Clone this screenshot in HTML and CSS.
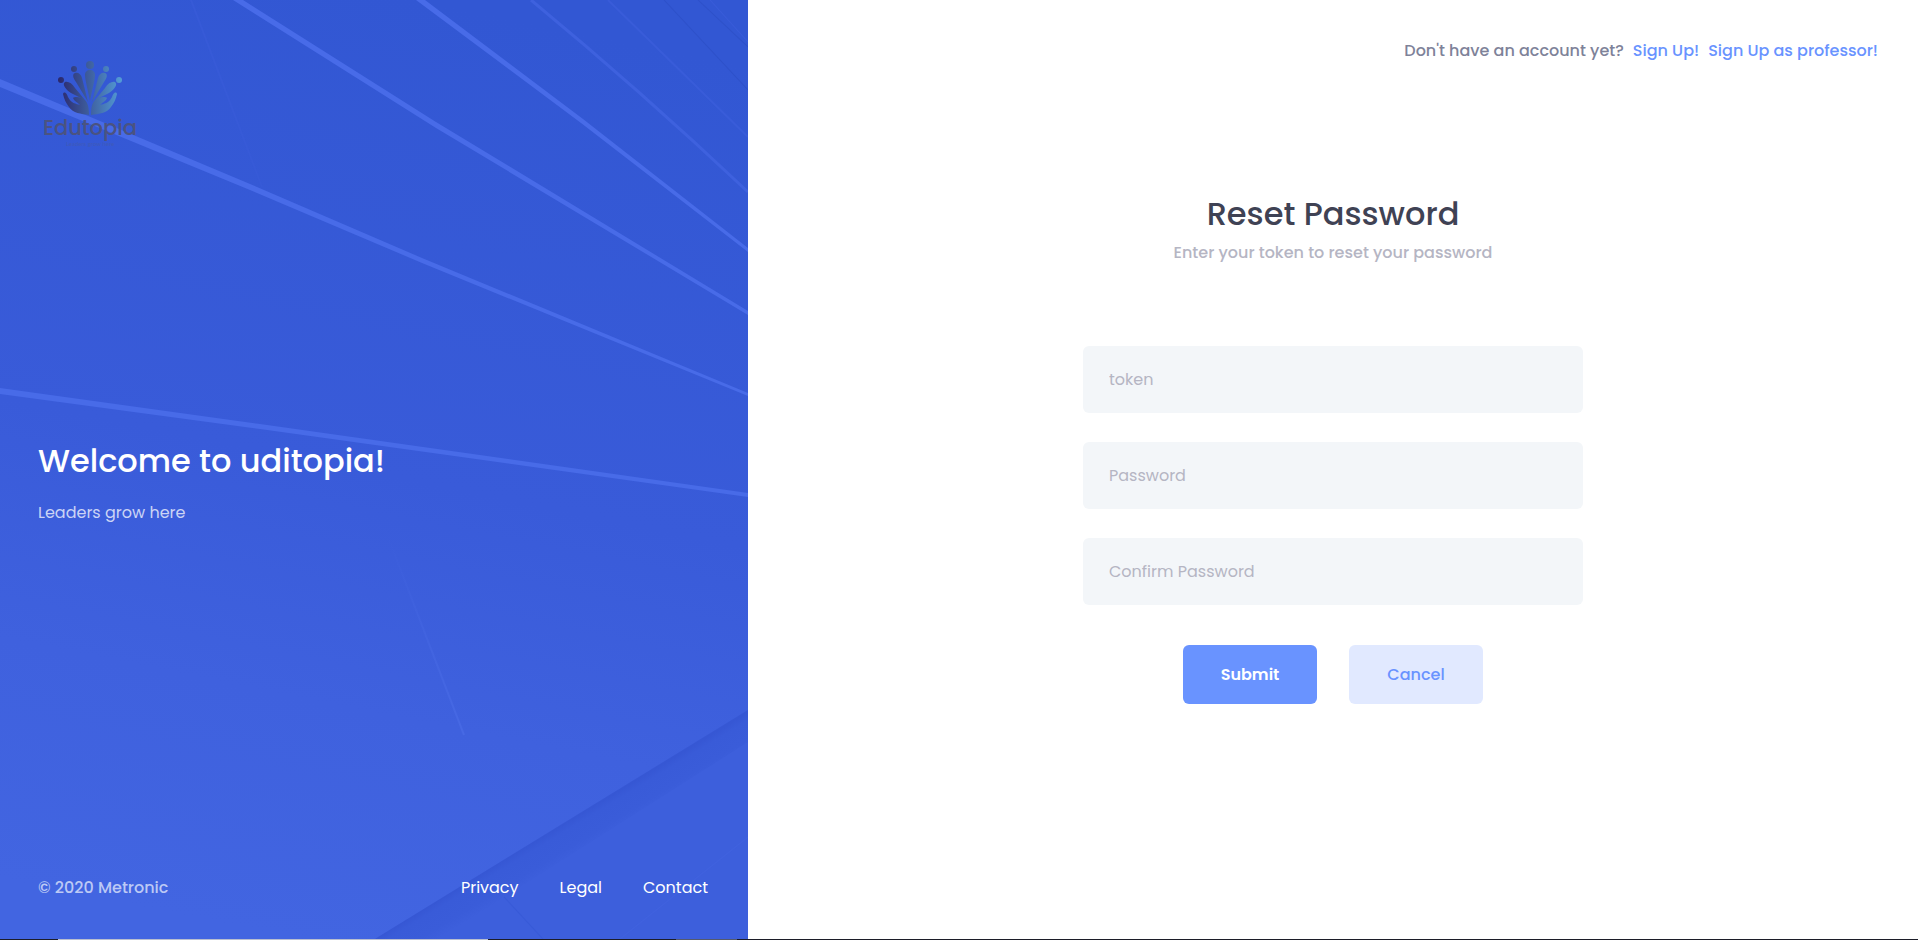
FILE: index.html
```html
<!DOCTYPE html>
<html lang="en">
<head>
<meta charset="utf-8">
<title>Reset Password</title>
<link rel="stylesheet" href="styles.css">
</head>
<body>
<div class="login">
  <aside class="aside">
    <svg class="aside-art" viewBox="0 0 748 939" preserveAspectRatio="none" aria-hidden="true">
      <defs>
        <linearGradient id="sky" x1="0.56" y1="0" x2="0.4" y2="1">
          <stop offset="0" stop-color="#3257d3"/>
          <stop offset="0.5" stop-color="#395bd9"/>
          <stop offset="0.75" stop-color="#3f61de"/>
          <stop offset="1" stop-color="#4265e1"/>
        </linearGradient>
        <linearGradient id="beam" gradientUnits="userSpaceOnUse" x1="375" y1="939" x2="392" y2="967">
          <stop offset="0" stop-color="#3657d4"/>
          <stop offset="0.2" stop-color="#395bd8"/>
          <stop offset="0.7" stop-color="#3a5cd9"/>
          <stop offset="1" stop-color="#3d5fdc"/>
        </linearGradient>
        <linearGradient id="trace" gradientUnits="userSpaceOnUse" x1="388" y1="537" x2="464" y2="735">
          <stop offset="0" stop-color="#4365e1" stop-opacity="0"/>
          <stop offset="1" stop-color="#4769e4"/>
        </linearGradient>
      </defs>
      <rect width="748" height="939" fill="url(#sky)"/>
      <path d="M748 710L375 939H748Z" fill="#3d5fdc"/>
      <path d="M748 710L375 939H439L748 742Z" fill="url(#beam)"/>
      <g fill="none">
        <path d="M531 0Q640 90 748 192" stroke="#3e61de" stroke-width="3"/>
        <path d="M608 0L748 137" stroke="#395cd9" stroke-width="2"/>
        <path d="M664 0L748 90M698 0L748 47" stroke="#2e51c9" stroke-width="1"/>
        <path d="M710 0L748 42" stroke="#395cd9" stroke-width="1"/>
        <path d="M191 0L262 187" stroke="#375ad7" stroke-width="2"/>
        <path d="M388 537L464 735" stroke="url(#trace)" stroke-width="2"/>
        <path d="M504 897L543 939" stroke="#385ad7" stroke-width="1"/>
        <path d="M620 939L748 837" stroke="#4062de" stroke-width="1"/>
      </g>
      <g fill="#486be8">
        <path d="M0 79L257 187L422 258L748 393V396L422 263L257 193L0 87Z"/>
        <path d="M233 0H243L436 122L748 311V315L436 128Z"/>
        <path d="M416 0H425L583 119L748 248V252L581 123Z"/>
        <path d="M0 388L260 424L748 493V497L260 429L0 394Z"/>
      </g>
    </svg>
    <a class="logo" href="#" aria-label="Edutopia">
      <svg class="logo-mark" viewBox="0 0 66 56" aria-hidden="true">
        <defs>
          <linearGradient id="mark" gradientUnits="userSpaceOnUse" x1="0" y1="0" x2="66" y2="0">
            <stop offset="0" stop-color="#29246a"/>
            <stop offset="0.5" stop-color="#3f609f"/>
            <stop offset="1" stop-color="#549fda"/>
          </linearGradient>
        </defs>
        <g fill="url(#mark)">
          <circle cx="4" cy="20" r="3"/><circle cx="17" cy="9" r="3"/><circle cx="33" cy="5" r="4"/><circle cx="49" cy="9" r="3"/><circle cx="62" cy="20" r="3"/>
          <path d="M33 10C36 10 38 12 38 15C38 20 35 30 33 41C31 30 28 20 28 15C28 12 30 10 33 10Z"/>
          <path d="M18 13C21 12 24 14 25 18L31 42L19 22C16 18 15 14 18 13Z"/>
          <path d="M48 13C45 12 42 14 41 18L35 42L47 22C50 18 51 14 48 13Z"/>
          <path d="M8 22C11 21 15 23 18 28L28 40L14 33C8 29 5 24 8 22Z"/>
          <path d="M58 22C55 21 51 23 48 28L38 40L52 33C58 29 61 24 58 22Z"/>
          <path d="M6 34C7 31 10 33 11 37C14 43 19 44 23 45C20 42 17 41 16 38C18 36 25 37 28 40C31 43 32 48 32 55C24 54 16 53 12 47C9 43 7 39 6 34Z"/>
          <path d="M60 34C59 31 56 33 55 37C52 43 47 44 43 45C46 42 49 41 50 38C48 36 41 37 38 40C35 43 34 48 34 55C42 54 50 53 54 47C57 43 59 39 60 34Z"/>
        </g>
      </svg>
      <span class="logo-name">Edutopia</span>
      <span class="logo-tag">Leaders grow here</span>
    </a>
    <div class="welcome">
      <h3 class="welcome-title">Welcome to uditopia!</h3>
      <p class="welcome-text">Leaders grow here</p>
    </div>
    <footer class="aside-footer">
      <span class="copyright">© 2020 Metronic</span>
      <nav class="footer-links"><a href="#">Privacy</a><a href="#">Legal</a><a href="#">Contact</a></nav>
    </footer>
  </aside>
  <main class="content">
    <div class="signup">
      <span>Don't have an account yet?</span>
      <a href="#">Sign Up!</a>
      <a href="#">Sign Up as professor!</a>
    </div>
    <form class="reset">
      <h1 class="reset-title">Reset Password</h1>
      <p class="reset-hint">Enter your token to reset your password</p>
      <div class="fields">
        <input class="field" type="text" placeholder="token" aria-label="token">
        <input class="field" type="password" placeholder="Password" aria-label="Password">
        <input class="field" type="password" placeholder="Confirm Password" aria-label="Confirm Password">
      </div>
      <div class="actions">
        <button class="button primary" type="submit">Submit</button>
        <button class="button light" type="button">Cancel</button>
      </div>
    </form>
  </main>
</div>
<div class="strip"></div>
</body>
</html>
```

FILE: styles.css
```css
* {
  box-sizing: border-box;
}

body {
  margin: 0;
  min-height: 100vh;
  display: flex;
  flex-direction: column;
  font: 500 16px/24px Poppins, Inter, sans-serif;
  color: #3f4254;
  background: #fff;
}

h1, h3, p {
  margin: 0;
}

a {
  text-decoration: none;
}

.login {
  flex: 1;
  display: flex;
}

.aside {
  position: relative;
  width: 39%;
  padding: 60px 40px 39px 38px;
  display: flex;
  flex-direction: column;
  background: #385ad8;
}

.aside > * {
  position: relative;
}

.aside .aside-art {
  position: absolute;
  inset: 0;
  width: 100%;
  height: 100%;
}

.logo {
  width: 104px;
  height: 92px;
  display: flex;
  flex-direction: column;
  align-items: center;
  color: #4b5380;
}

.logo-mark {
  width: 66px;
  height: 56px;
}

.logo-name {
  font: 500 21px/23px Poppins, sans-serif;
}

.logo-tag {
  font: 400 6px/10px Lato, sans-serif;
  color: #3f59b8;
}

.welcome {
  margin: auto 0;
  padding-bottom: 62px;
}

.welcome-title {
  font-size: 32px;
  line-height: 40px;
  font-weight: 500;
  color: #fff;
}

.welcome-text {
  margin-top: 20px;
  font-weight: 400;
  color: #cbd4f5;
}

.aside-footer {
  display: flex;
  justify-content: space-between;
}

.copyright {
  color: #bcc9f5;
}

.footer-links {
  display: flex;
  gap: 41px;
}

.footer-links a {
  color: #fff;
  font-weight: 400;
}

.content {
  flex: 1;
  padding: 39px 40px;
  display: flex;
  flex-direction: column;
  align-items: center;
}

.signup {
  align-self: flex-end;
  display: flex;
  gap: 9px;
  color: #7e8299;
}

.signup a {
  color: #6993ff;
}

.reset {
  width: 500px;
  max-width: 100%;
  margin-top: 131px;
  text-align: center;
}

.reset-title {
  font-size: 32px;
  line-height: 40px;
  font-weight: 500;
}

.reset-hint {
  margin-top: 7px;
  color: #b5b5c3;
}

.fields {
  margin-top: 81px;
  display: flex;
  flex-direction: column;
  gap: 29px;
}

.field {
  width: 100%;
  height: 67px;
  padding: 0 26px;
  border: 0;
  border-radius: 6px;
  background: #f3f6f9;
  font: inherit;
  font-weight: 400;
  color: #3f4254;
}

.field::placeholder {
  color: #b5b5c3;
  opacity: 1;
}

.actions {
  margin-top: 40px;
  display: flex;
  justify-content: center;
  gap: 32px;
}

.button {
  width: 134px;
  height: 59px;
  border: 0;
  border-radius: 6px;
  font: inherit;
}

.primary {
  background: #6993ff;
  color: #fff;
  font-weight: 600;
}

.light {
  background: #e1e9ff;
  color: #6993ff;
}

.strip {
  height: 1px;
  background: linear-gradient(to right, #1c1d28 58px, #b9bfd0 58px 488px, #1c1d28 488px 676px, #555a6c 676px 737px, #1c1d28 737px);
}
```
